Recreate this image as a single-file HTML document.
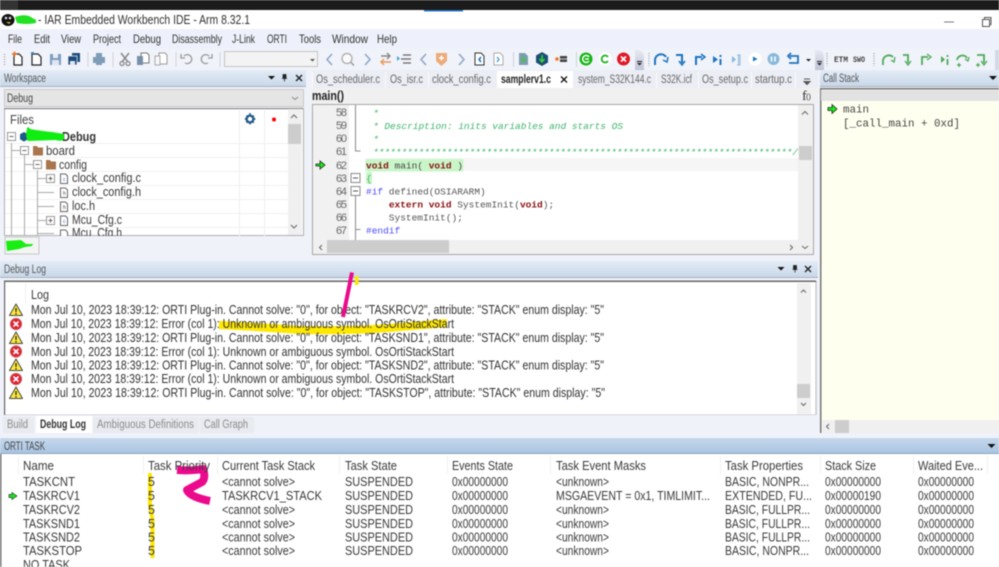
<!DOCTYPE html>
<html><head><meta charset="utf-8"><style>
html,body{margin:0;padding:0;background:#f0f2fa;width:999px;height:567px;overflow:hidden}
svg{display:block;filter:blur(.4px)}
text{font-family:"Liberation Sans",sans-serif;font-size:12.5px;fill:#3a3a3a;white-space:pre}
.m{font-family:"Liberation Mono",monospace;font-size:9.5px}
.c{fill:#3eb56c;font-style:italic}
.k{fill:#8a1010;font-weight:bold}
.p{fill:#4a4aff}
.n{fill:#666;font-size:11px}
.tb{font-size:11.5px;fill:#666}
.g{font-size:11.5px;fill:#8a8a8a}
.h{font-size:12px;fill:#333}
.w{font-size:11.5px;fill:#555}
</style></head><body>
<svg width="999" height="567" viewBox="0 0 999 567" xmlns="http://www.w3.org/2000/svg">
<defs>
<linearGradient id="h1" x1="0" y1="0" x2="0" y2="1"><stop offset="0" stop-color="#e4ecf6"/><stop offset="1" stop-color="#c8d8ea"/></linearGradient>
<linearGradient id="h2" x1="0" y1="0" x2="0" y2="1"><stop offset="0" stop-color="#c6d8ec"/><stop offset="1" stop-color="#a9c5e3"/></linearGradient>
<linearGradient id="gr" x1="0" y1="0" x2="0" y2="1"><stop offset="0" stop-color="#e8e9f2"/><stop offset="1" stop-color="#bfc3d6"/></linearGradient>
</defs>
<rect width="999" height="567" fill="#f0f2fa"/>
<!-- top -->
<rect width="999" height="10" fill="#1b1b1b"/>
<rect x="0" y="0" width="18" height="10" fill="#333"/>
<rect y="10" width="999" height="19" fill="#fff"/>
<rect x="424" y="10" width="39" height="1.5" fill="#2a78d0"/>
<ellipse cx="8" cy="20" rx="6.500" ry="6" fill="#111"/><circle cx="6" cy="18" r="1.300" fill="#ddd"/><circle cx="10" cy="18" r="1.300" fill="#ddd"/><path d="M6 22h5l-2 2z" fill="#c9b040"/>
<path d="M15 17q8-3 14-1l7 4v3q-10 2-19 0z" fill="#22e022"/>
<text x="38" y="24" textLength="212" lengthAdjust="spacingAndGlyphs" style="font-size:13px;fill:#333">- IAR Embedded Workbench IDE - Arm 8.32.1</text>
<rect x="944" y="21.5" width="10" height="1" fill="#777"/>
<path d="M982.5 19.5h7v7h-7zM984.5 19.5v-2h6.500v7h-2" fill="none" stroke="#555" stroke-width="1"/>
<!-- menu -->
<rect y="29" width="999" height="20" fill="#eef1fb"/>
<text x="8" y="43" textLength="14" lengthAdjust="spacingAndGlyphs" class="h">File</text>
<text x="34" y="43" textLength="16" lengthAdjust="spacingAndGlyphs" class="h">Edit</text>
<text x="61" y="43" textLength="20" lengthAdjust="spacingAndGlyphs" class="h">View</text>
<text x="93" y="43" textLength="28" lengthAdjust="spacingAndGlyphs" class="h">Project</text>
<text x="133" y="43" textLength="28" lengthAdjust="spacingAndGlyphs" class="h">Debug</text>
<text x="172" y="43" textLength="50" lengthAdjust="spacingAndGlyphs" class="h">Disassembly</text>
<text x="232" y="43" textLength="23" lengthAdjust="spacingAndGlyphs" class="h">J-Link</text>
<text x="267" y="43" textLength="20" lengthAdjust="spacingAndGlyphs" class="h">ORTI</text>
<text x="299" y="43" textLength="22" lengthAdjust="spacingAndGlyphs" class="h">Tools</text>
<text x="332" y="43" textLength="36" lengthAdjust="spacingAndGlyphs" class="h">Window</text>
<text x="377" y="43" textLength="20" lengthAdjust="spacingAndGlyphs" class="h">Help</text>
<!-- toolbar -->
<rect y="49" width="999" height="21" fill="#f1f3fa"/>
<path d="M4.500 54v12" stroke="#999" stroke-width="1.200" stroke-dasharray="1 1.500"/>
<path d="M14 54h5l3 3v8h-8z" fill="#fff" stroke="#222" stroke-width="1.200"/><path d="M12 54h5M14.500 51.500v5" stroke="#e8702a" stroke-width="1.500"/>
<path d="M32 54h6l3 3v8h-9z" fill="#fff" stroke="#222" stroke-width="1.200"/><path d="M31 53l3 0" stroke="#3a90d0" stroke-width="2"/>
<path d="M50 54h11v11h-11z" fill="#7d9dbf"/><rect x="53" y="54" width="5" height="4" fill="#e8eef6"/><rect x="52" y="60" width="7" height="5" fill="#dfe6ef"/>
<path d="M72 53h8v9h-8z" fill="#1f4f7f"/><path d="M68 56h9v9h-9z" fill="#1d4a78" stroke="#f1f3fa" stroke-width=".7"/><rect x="70" y="61" width="5" height="4" fill="#dfe6ef"/>
<rect x="87.500" y="52" width="1" height="15" fill="#cfd2da"/>
<path d="M96 53h6v4h-6zM93 57h12v6h-12zM96 61h6v4h-6z" fill="#7f9cb6"/>
<rect x="112.500" y="52" width="1" height="15" fill="#cfd2da"/>
<path d="M121 53l7 9M129 53l-7 9" stroke="#888" stroke-width="1.500"/><circle cx="122" cy="63.500" r="2" fill="none" stroke="#888" stroke-width="1.300"/><circle cx="128" cy="63.500" r="2" fill="none" stroke="#888" stroke-width="1.300"/>
<path d="M141 53h6l2 2v8h-8z" fill="#fff" stroke="#777"/><path d="M137 56h6v9h-6z" fill="#778fa8"/>
<path d="M159 53h6l2 2v9h-8z" fill="#fff" stroke="#999"/><path d="M155 56h5v9h-5z" fill="#f8f8f8" stroke="#aaa"/>
<rect x="175.500" y="52" width="1" height="15" fill="#cfd2da"/>
<path d="M184 56a4.500 4.500 0 1 1 1 7M181 54v4h4" fill="none" stroke="#999" stroke-width="1.300"/>
<path d="M209 56a4.500 4.500 0 1 0-1 7M212 54v4h-4" fill="none" stroke="#999" stroke-width="1.300"/>
<rect x="219.500" y="52" width="1" height="15" fill="#cfd2da"/>
<rect x="224.500" y="51.500" width="93" height="15" fill="#f3f3f3" stroke="#c4c4c4"/><path d="M310 59h5l-2.500 2.500z" fill="#555"/>
<path d="M332 54l-5 5.500 5 5.500" fill="none" stroke="#8aa6c6" stroke-width="1.500"/>
<circle cx="347" cy="58.500" r="5" fill="#fafafa" stroke="#aaa" stroke-width="1.300"/><path d="M351 62.500l3 3" stroke="#999" stroke-width="1.500"/>
<path d="M365 54l5 5.500-5 5.500" fill="none" stroke="#8aa6c6" stroke-width="1.500"/>
<path d="M381 56h9M387 53l3 3-3 3" fill="none" stroke="#888" stroke-width="1.400"/><path d="M391 62h-9M384 59l-3 3 3 3" fill="none" stroke="#e89858" stroke-width="1.400"/>
<path d="M397 56l3 2.500-3 2.500z" fill="#4aa0d8"/><path d="M403 55h8M401 59h10M403 63h8" stroke="#666" stroke-width="1.300"/>
<path d="M426 54l-5 5.500 5 5.500" fill="none" stroke="#8aa6c6" stroke-width="1.500"/>
<path d="M436 53h11v8l-5.500 5-5.500-5z" fill="#ecab78"/><path d="M439 58h5M441.500 55.500v5" stroke="#fff" stroke-width="1.500"/>
<path d="M459 54l5 5.500-5 5.500" fill="none" stroke="#8aa6c6" stroke-width="1.500"/>
<path d="M475 53h6l3 3v9h-9z" fill="#fff" stroke="#333"/><path d="M481 57l-2 2.500 2 2.500" fill="none" stroke="#1c70c0" stroke-width="1.500"/>
<path d="M494 53h6l3 3v9h-9z" fill="#fff" stroke="#aaa"/><path d="M497 57l2 2.500-2 2.500" fill="none" stroke="#60a8e0" stroke-width="1.500"/>
<rect x="513" y="52" width="1" height="15" fill="#cfd2da"/>
<path d="M519 53h6l3 3v9h-9z" fill="#7f9cb6"/><path d="M523.500 55v6M521 59l2.500 3 2.500-3" fill="none" stroke="#4cc04c" stroke-width="1.400"/>
<path d="M542 52l6 3.500v7l-6 3.500-6-3.500v-7z" fill="#1c4f74"/><path d="M542 55v6M539.500 59l2.500 3 2.500-3" fill="none" stroke="#3bd03b" stroke-width="1.500"/>
<circle cx="557" cy="59" r="1.800" fill="#f07a20"/><path d="M560 56h7v6h-7z" fill="#444"/><path d="M560 59h7" stroke="#eee" stroke-width=".8"/>
<rect x="576" y="52" width="1" height="15" fill="#cfd2da"/>
<circle cx="586" cy="59" r="6.500" fill="#14b414"/><path d="M589 57a3.500 3.500 0 1 0 0 4M585 59h4" fill="none" stroke="#fff" stroke-width="1.500"/>
<circle cx="605" cy="59" r="6.500" fill="#fff"/><path d="M608 57a3.500 3.500 0 1 0 0 4" fill="none" stroke="#1cb41c" stroke-width="1.800"/>
<circle cx="623.500" cy="59" r="6.500" fill="#de1a26"/><path d="M621 56.500l5 5M626 56.500l-5 5" stroke="#fff" stroke-width="1.700"/>
<path d="M635 50h4q5 1 5 8v12h-9z" fill="url(#gr)"/><path d="M637 63h5l-2.500 2.500z" fill="#222"/><path d="M637 61.500h5" stroke="#222"/>
<path d="M649 53v13" stroke="#999" stroke-width="1.200" stroke-dasharray="1 1.500"/>
<g fill="none" stroke="#1c74c0" stroke-width="2">
<path d="M655 65v-5a6 6 0 0 1 11 -3"/><path d="M663 60l4 2 1-5" stroke-width="1.500"/>
<path d="M676 55h6v8"/><path d="M679 61l3 4 3-4" stroke-width="1.500"/>
<path d="M696 65v-8h6"/><path d="M701 54l4 3-4 3" stroke-width="1.500"/>
<path d="M720.500 55v2M720.500 59v6"/>
</g>
<path d="M713 56l5 3.500-5 3.500z" fill="#1c74c0"/>
<path d="M732 56l4 3.500-4 3.500zM737 59.500h-5" fill="#8ab8dc"/><path d="M737 55h3v10h-3M738.500 55v10" fill="none" stroke="#8ab8dc" stroke-width="1"/>
<circle cx="755" cy="59" r="6.500" fill="#fff"/><path d="M753 56.500l4.500 2.500-4.500 2.500z" fill="#1c74c0"/>
<circle cx="773.500" cy="59" r="6" fill="#8ab8dc"/><path d="M771.500 56.500v5M775 56.500v5" stroke="#fff" stroke-width="1.500"/>
<path d="M790 56h8v7h-9M791 53l-3 3 3 3" fill="none" stroke="#1c74c0" stroke-width="1.800"/>
<path d="M806 59h5l-2.500 2.500z" fill="#222"/>
<path d="M815 50h4q5 1 5 8v12h-9z" fill="url(#gr)"/><path d="M817 63h5l-2.500 2.500z" fill="#222"/><path d="M817 61.500h5" stroke="#222"/>
<path d="M827 53v13" stroke="#999" stroke-width="1.200" stroke-dasharray="1 1.500"/>
<text x="834" y="62" textLength="14" lengthAdjust="spacingAndGlyphs" style="font-size:8.500px;fill:#444;font-family:'Liberation Mono',monospace;font-weight:bold">ETM</text>
<text x="853" y="62" textLength="12" lengthAdjust="spacingAndGlyphs" style="font-size:8.500px;fill:#444;font-family:'Liberation Mono',monospace;font-weight:bold">SWO</text>
<path d="M874 53v13" stroke="#999" stroke-width="1.200" stroke-dasharray="1 1.500"/>
<g fill="none" stroke="#4caa5a" stroke-width="1.800">
<path d="M883 65v-5a6 6 0 0 1 10-3"/><path d="M891 60l3 2 1-5" stroke-width="1.300"/>
<path d="M903 55h5v8"/><path d="M905 61l3 4 3-4" stroke-width="1.300"/>
<path d="M922 65v-8h6"/><path d="M927 54l4 3-4 3" stroke-width="1.300"/>
<path d="M947.500 55v2M947.500 59v6"/>
<path d="M957 60a5.500 5.500 0 0 1 10-2"/><path d="M965 59l3 2 1-4" stroke-width="1.300"/><path d="M959 63v4M957 65h4" stroke-width="1.300"/>
<path d="M977 55h7v8"/><path d="M981 61l3 4 3-4" stroke-width="1.300"/><path d="M978 63v4M976 65h4" stroke-width="1.300"/>
</g>
<path d="M941 56l4 3.500-4 3.500z" fill="#4caa5a"/>
<path d="M995 50h4v20h-4z" fill="#d5d8e6"/>
<!-- workspace panel -->
<rect x="0" y="70" width="306" height="190" fill="#f0f2fa"/>
<rect x="0" y="70" width="306" height="16" fill="url(#h1)"/>
<rect x="0" y="86" width="306" height="1" fill="#a8b0bc"/>
<text x="4" y="82" textLength="42" lengthAdjust="spacingAndGlyphs" class="w">Workspace</text>
<path d="M268 76h7l-3.500 3.500z" fill="#111"/><path d="M283 74.500h3v4h-3zM282 78.500h5M284.500 78.500v3" fill="#222" stroke="#222" stroke-width=".8"/><path d="M296 75l6 6M302 75l-6 6" stroke="#222" stroke-width="1.400"/>
<rect x="4.500" y="89.500" width="299" height="17" fill="#e5e5e5" stroke="#c8c8c8"/>
<text x="7" y="102" textLength="26" lengthAdjust="spacingAndGlyphs" class="w" style="fill:#444">Debug</text>
<path d="M292 97l3 2.500 3-2.500" fill="none" stroke="#888"/>
<!-- tree -->
<rect x="4.500" y="108.500" width="299" height="127" fill="#fff" stroke="#b0b0b0"/>
<rect x="4" y="108" width="299" height="1.200" fill="#888"/>
<text x="10" y="124" textLength="24" lengthAdjust="spacingAndGlyphs" style="fill:#444">Files</text>
<path d="M250 114.500a4.500 4.500 0 1 0 .01 0zM250 116.800a2.200 2.200 0 1 1-.01 0z" fill="#235a88" fill-rule="evenodd"/><path d="M250 113v2M250 122.500v2M244.800 119h2M253.500 119h2M246.500 115.500l1.200 1.200M252.600 121.500l1.200 1.200M253.800 115.500l-1.200 1.200M247.500 121.500l-1.200 1.200" stroke="#235a88" stroke-width="1.500"/>
<circle cx="274" cy="119.500" r="2" fill="#f00"/>
<path d="M239.500 109v127M264.500 109v127" stroke="#eeeeee"/>
<path d="M5 143.500h283M5 157.500h283M5 171.500h283M5 185.500h283M5 199.500h283M5 213.500h283M5 227.500h283" stroke="#f0f0f0"/>
<rect x="288" y="109" width="14" height="126" fill="#f0f0f0"/><rect x="288" y="124" width="13" height="20" fill="#cdcdcd"/>
<path d="M291 118l3-3 3 3" fill="none" stroke="#666"/><path d="M291 225l3 3 3-3" fill="none" stroke="#666"/>
<g stroke="#a8a8a8" fill="none">
<path d="M11.500 143v92M24.500 155v80M37.500 170v65M24.500 150.500h-13M37.500 164.500h-13M47 178.500h-10M54 192.500h-17M54 206.500h-17M47 220.500h-10M54 233.500h-17"/>
</g>
<g fill="#fff" stroke="#999">
<rect x="7.500" y="132.500" width="8" height="8"/><rect x="20.500" y="146.500" width="8" height="8"/><rect x="33.500" y="160.500" width="8" height="8"/><rect x="46.500" y="174.500" width="8" height="8"/><rect x="46.500" y="216.500" width="8" height="8"/>
</g>
<path d="M9.500 136.500h4M22.500 150.500h4M35.500 164.500h4M48.500 178.500h4M50.500 176.500v4M48.500 220.500h4M50.500 218.500v4" stroke="#666"/>
<path d="M24 132l4 2.300v5l-4 2.300-4-2.300v-5z" fill="#1f5a86"/>
<text x="62" y="141" textLength="34" lengthAdjust="spacingAndGlyphs" style="font-weight:bold;fill:#333">Debug</text>
<path d="M27 128q2-2 3 1q12 2 22 3l12 2v5q-3 3-8 1l-28 1q-3-4-1-13z" fill="#0fee10"/>
<path d="M33 146h4l1 1.500h5v8h-10z" fill="#a8754c"/><path d="M46 160h4l1 1.500h5v8h-10z" fill="#a8754c"/>
<text x="46" y="155" textLength="29" lengthAdjust="spacingAndGlyphs">board</text>
<text x="59" y="169" textLength="28" lengthAdjust="spacingAndGlyphs">config</text>
<g fill="#fff" stroke="#666"><path d="M60.500 174h5l2 2v7.500h-7z"/><path d="M60.500 188h5l2 2v7.500h-7z"/><path d="M60.500 202h5l2 2v7.500h-7z"/><path d="M60.500 216h5l2 2v7.500h-7z"/><path d="M60.500 230h5l2 2v7.500h-7z"/></g>
<text x="63" y="181" style="font-size:5px;fill:#2a6ab0">c</text><text x="63" y="195" style="font-size:5px">h</text><text x="63" y="209" style="font-size:5px">h</text><text x="63" y="223" style="font-size:5px;fill:#2a6ab0">c</text>
<text x="72" y="182" textLength="69" lengthAdjust="spacingAndGlyphs">clock_config.c</text>
<text x="72" y="196" textLength="69" lengthAdjust="spacingAndGlyphs">clock_config.h</text>
<text x="72" y="210" textLength="23" lengthAdjust="spacingAndGlyphs">loc.h</text>
<text x="72" y="224" textLength="50" lengthAdjust="spacingAndGlyphs">Mcu_Cfg.c</text>
<text x="72" y="237" textLength="50" lengthAdjust="spacingAndGlyphs">Mcu_Cfg.h</text>
<rect x="0" y="236" width="306" height="24" fill="#f0f2fa"/>
<rect x="5" y="237" width="34" height="17" fill="#f4f4f4" stroke="#bbb" stroke-width=".8"/>
<path d="M6 241l15 -1 5 4 7 0 -1 2-7 1-6 2-12 2z" fill="#18ee12"/>
<!-- editor -->
<rect x="306" y="70" width="5" height="190" fill="#f0f2fa"/>
<rect x="312" y="70" width="506" height="18" fill="#eceef5"/>
<rect x="497" y="71" width="76" height="17" fill="#fff"/>
<path d="M312.500 72v16M385.500 72v16M428.500 72v16M656.500 72v16M698.500 72v16M751.500 72v16M795.500 72v16" stroke="#fafafa"/>
<text x="316" y="83" textLength="64" lengthAdjust="spacingAndGlyphs" class="tb">Os_scheduler.c</text>
<text x="390" y="83" textLength="33" lengthAdjust="spacingAndGlyphs" class="tb">Os_isr.c</text>
<text x="432" y="83" textLength="59" lengthAdjust="spacingAndGlyphs" class="tb">clock_config.c</text>
<text x="501" y="83" textLength="50" lengthAdjust="spacingAndGlyphs" class="tb" style="font-weight:bold;fill:#222">samplerv1.c</text>
<text x="578" y="83" textLength="73" lengthAdjust="spacingAndGlyphs" class="tb">system_S32K144.c</text>
<text x="661" y="83" textLength="31" lengthAdjust="spacingAndGlyphs" class="tb">S32K.icf</text>
<text x="702" y="83" textLength="46" lengthAdjust="spacingAndGlyphs" class="tb">Os_setup.c</text>
<text x="755" y="83" textLength="37" lengthAdjust="spacingAndGlyphs" class="tb">startup.c</text>
<path d="M561 76.500l6 6M567 76.500l-6 6" stroke="#111" stroke-width="1.300"/>
<path d="M804 79h6M804 81.500h6l-3 3z" stroke="#555" fill="#555"/>
<rect x="311" y="88" width="507" height="16" fill="#f0f0f0"/>
<text x="312" y="100" textLength="32" lengthAdjust="spacingAndGlyphs" style="font-size:13px;font-weight:bold;fill:#222">main()</text>
<text x="802" y="100" style="font-size:14px;fill:#333;font-family:'Liberation Serif',serif">f</text><text x="806" y="99" style="font-size:7.500px;fill:#333">()</text>
<rect x="312.500" y="104.500" width="501" height="150" fill="#fff" stroke="#a8a8a8"/>
<rect x="313" y="105" width="36" height="135" fill="#f1f1f1"/>
<rect x="349" y="105" width="12" height="135" fill="#fff"/>
<rect x="365" y="158" width="433" height="13" fill="#f6f6f6"/>
<rect x="365.500" y="159" width="98" height="12.500" rx="2" fill="#c9f5c9"/>
<rect x="366" y="172" width="6" height="12" rx="1.500" fill="#c9f5c9"/>
<text x="336" y="116" class="n" textLength="11">58</text><text x="336" y="129" class="n" textLength="11">59</text><text x="336" y="142" class="n" textLength="11">60</text><text x="336" y="155" class="n" textLength="11">61</text><text x="336" y="169" class="n" textLength="11">62</text><text x="336" y="182" class="n" textLength="11">63</text><text x="336" y="195" class="n" textLength="11">64</text><text x="336" y="208" class="n" textLength="11">65</text><text x="336" y="221" class="n" textLength="11">66</text><text x="336" y="234" class="n" textLength="11">67</text>
<path d="M316 165h4v-3l5 4-5 4v-3h-4z" fill="#14ee14" stroke="#222" stroke-width=".8" transform="translate(0,-1)"/>
<path d="M355.500 105v46h5" fill="none" stroke="#8a8a8a"/>
<path d="M355.500 196v44M355.500 229.500h5" fill="none" stroke="#8a8a8a"/>
<g fill="#fff" stroke="#888"><rect x="351" y="173.500" width="9" height="9"/><rect x="351" y="186.500" width="9" height="9"/></g>
<path d="M353 178h5M353 191h5" stroke="#555"/>
<text x="373" y="116" class="m c">*</text>
<text x="373" y="129" class="m c" textLength="250">* Description: inits variables and starts OS</text>
<text x="373" y="142" class="m c">*</text>
<text x="373" y="155" class="m c" textLength="425" lengthAdjust="spacingAndGlyphs">**************************************************************************/</text>
<text x="366" y="168.500" class="m" style="fill:#444"><tspan class="k">void</tspan> main( <tspan class="k">void</tspan> )</text>
<text x="366" y="181.500" class="m" style="fill:#3eb56c">{</text>
<text x="366" y="194.500" class="m" style="fill:#555"><tspan class="p">#if</tspan> defined(OSIARARM)</text>
<text x="366" y="207.500" class="m" style="fill:#555">    <tspan class="k">extern void</tspan> SystemInit(<tspan class="k">void</tspan>);</text>
<text x="366" y="220.500" class="m" style="fill:#555">    SystemInit();</text>
<text x="366" y="233.500" class="m p">#endif</text>
<rect x="798" y="105" width="15" height="135" fill="#f0f0f0"/><rect x="799" y="146" width="13" height="14" fill="#cdcdcd"/>
<path d="M802 114.500l3-3 3 3" fill="none" stroke="#666"/>
<rect x="313" y="240" width="500" height="14" fill="#f0f0f0"/><rect x="327" y="240" width="122" height="13" fill="#cdcdcd"/>
<path d="M322 245l-2.500 2.500 2.500 2.500M790 245l2.500 2.500-2.500 2.500M802 246l3 2.500 3-2.500" fill="none" stroke="#666"/>
<!-- debug log -->
<rect x="0" y="257" width="818" height="4" fill="#f0f2fa"/>
<rect x="0" y="261" width="818" height="16" fill="url(#h1)"/><rect x="0" y="277" width="818" height="1" fill="#a8b0bc"/>
<text x="4" y="273" textLength="42" lengthAdjust="spacingAndGlyphs" class="w">Debug Log</text>
<path d="M777.500 267h7l-3.500 3.500z" fill="#111"/><path d="M793.500 265.500h3v4h-3zM792.500 269.500h5M795 269.500v3" fill="#222" stroke="#222" stroke-width=".8"/><path d="M805 266l6 6M811 266l-6 6" stroke="#222" stroke-width="1.400"/>
<rect x="4.500" y="281" width="811.500" height="134" fill="#fff" stroke="#b8b8b8"/>
<rect x="4" y="280.500" width="812" height="1.500" fill="#666"/><rect x="4" y="281" width="1.200" height="134" fill="#666"/>
<rect x="25" y="283" width="1" height="20" fill="#f0f0f0"/>
<rect x="797" y="283" width="14" height="131" fill="#f0f0f0"/><rect x="797" y="384" width="13" height="14" fill="#cdcdcd"/>
<path d="M801 292.500l2.500-2.500 2.500 2.500M801 403l2.500 2.500 2.500-2.500" fill="none" stroke="#666"/>
<!-- annotations under text -->
<path d="M219 325 Q260 327 300 330 Q360 331 400 327 L447 323" fill="none" stroke="#ffe800" stroke-width="8"/>
<text x="31" y="299" textLength="18" lengthAdjust="spacingAndGlyphs">Log</text>
<text x="31" y="314" textLength="573" lengthAdjust="spacingAndGlyphs" style="fill:#333">Mon Jul 10, 2023 18:39:12: ORTI Plug-in. Cannot solve: "0", for object: "TASKRCV2", attribute: "STACK" enum display: "5"</text>
<text x="31" y="328" textLength="423" lengthAdjust="spacingAndGlyphs" style="fill:#333">Mon Jul 10, 2023 18:39:12: Error (col 1): Unknown or ambiguous symbol. OsOrtiStackStart</text>
<text x="31" y="342" textLength="573" lengthAdjust="spacingAndGlyphs" style="fill:#333">Mon Jul 10, 2023 18:39:12: ORTI Plug-in. Cannot solve: "0", for object: "TASKSND1", attribute: "STACK" enum display: "5"</text>
<text x="31" y="356" textLength="423" lengthAdjust="spacingAndGlyphs" style="fill:#333">Mon Jul 10, 2023 18:39:12: Error (col 1): Unknown or ambiguous symbol. OsOrtiStackStart</text>
<text x="31" y="369.500" textLength="573" lengthAdjust="spacingAndGlyphs" style="fill:#333">Mon Jul 10, 2023 18:39:12: ORTI Plug-in. Cannot solve: "0", for object: "TASKSND2", attribute: "STACK" enum display: "5"</text>
<text x="31" y="383" textLength="423" lengthAdjust="spacingAndGlyphs" style="fill:#333">Mon Jul 10, 2023 18:39:12: Error (col 1): Unknown or ambiguous symbol. OsOrtiStackStart</text>
<text x="31" y="397" textLength="574" lengthAdjust="spacingAndGlyphs" style="fill:#333">Mon Jul 10, 2023 18:39:12: ORTI Plug-in. Cannot solve: "0", for object: "TASKSTOP", attribute: "STACK" enum display: "5"</text>
<!-- log icons -->
<g fill="#ffec3a" stroke="#444" stroke-linejoin="round"><path d="M16 304l6.500 11.500h-13z"/><path d="M16 332l6.500 11.500h-13z"/><path d="M16 359l6.500 11.500h-13z"/><path d="M16 387l6.500 11.500h-13z"/></g>
<path d="M16 308v4M16 313v1.500M16 336v4M16 341v1.500M16 363v4M16 368v1.500M16 391v4M16 396v1.500" stroke="#222" stroke-width="1.300"/>
<g fill="#e02030" stroke="#b88" stroke-width=".8"><circle cx="16" cy="324" r="5.800"/><circle cx="16" cy="351.500" r="5.800"/><circle cx="16" cy="379" r="5.800"/></g>
<path d="M13.500 321.500l5 5M18.500 321.500l-5 5M13.500 349l5 5M18.500 349l-5 5M13.500 376.500l5 5M18.500 376.500l-5 5" stroke="#fff" stroke-width="1.600"/>
<path d="M352 272.500 L343 317" fill="none" stroke="#ec0a8c" stroke-width="4"/>
<rect x="355" y="276" width="3.500" height="9" fill="#ffe800"/>
<!-- bottom tabs -->
<rect x="0" y="415" width="818" height="23" fill="#f0f2fa"/>
<rect x="3" y="417" width="31" height="16" fill="#e9ebf1"/><rect x="36" y="416" width="56" height="17" fill="#fff"/><rect x="93" y="417" width="106" height="16" fill="#e9ebf1"/><rect x="200" y="417" width="54" height="16" fill="#e9ebf1"/>
<text x="7" y="428" textLength="21" lengthAdjust="spacingAndGlyphs" class="g">Build</text>
<text x="40" y="428" textLength="46" lengthAdjust="spacingAndGlyphs" class="g" style="fill:#333;font-weight:bold">Debug Log</text>
<text x="97" y="428" textLength="97" lengthAdjust="spacingAndGlyphs" class="g">Ambiguous Definitions</text>
<text x="204" y="428" textLength="44" lengthAdjust="spacingAndGlyphs" class="g">Call Graph</text>
<!-- call stack -->
<rect x="818" y="70" width="181" height="368" fill="#f0f2fa"/>
<rect x="820" y="70" width="179" height="16" fill="url(#h1)"/><rect x="820" y="86" width="179" height="1" fill="#a8b0bc"/>
<text x="823" y="82" textLength="36" lengthAdjust="spacingAndGlyphs" class="w">Call Stack</text>
<path d="M989 76h8l-4 4z" fill="#111"/>
<rect x="820" y="88" width="179" height="345" fill="#fffff0"/>
<rect x="820" y="88" width="179" height="1.500" fill="#777"/><rect x="820" y="88" width="1.500" height="345" fill="#777"/>
<rect x="821" y="90" width="178" height="11" fill="#e2e2e2"/>
<path d="M828 107.500h4v-3l5 4.500-5 4.500v-3h-4z" fill="#14ee14" stroke="#222" stroke-width=".8"/>
<text x="843" y="112.500" style="font-family:'Liberation Mono',monospace;font-size:10.800px;fill:#444" textLength="26">main</text>
<text x="843" y="126.500" style="font-family:'Liberation Mono',monospace;font-size:10.800px;fill:#444" textLength="117">[_call_main + 0xd]</text>
<rect x="822" y="420" width="177" height="13" fill="#f0f0f0"/><rect x="835" y="420" width="14" height="13" fill="#cdcdcd"/>
<path d="M829 424l-2.500 2.500 2.500 2.500" fill="none" stroke="#666"/>
<!-- ORTI -->
<rect x="0" y="433" width="999" height="5" fill="#f0f2fa"/>
<rect x="0" y="438" width="999" height="15" fill="url(#h2)"/><rect x="0" y="453" width="999" height="1" fill="#8ea4bc"/>
<text x="4" y="450" textLength="41" lengthAdjust="spacingAndGlyphs" class="w" style="fill:#444">ORTI TASK</text>
<path d="M987.500 444h8l-4 4z" fill="#111"/>
<rect x="0" y="454" width="999" height="113" fill="#fff"/><rect x="0" y="454" width="1.500" height="113" fill="#777"/>
<path d="M18.500 456v18M143.500 456v18M217.500 456v18M339.500 456v18M447.500 456v18M550.500 456v18M720.500 456v18M820.500 456v18M913.500 456v18M987.500 456v18" stroke="#efefef"/>
<path d="M150 473 L150 505 L152.500 520 L152.500 558" fill="none" stroke="#ffe600" stroke-width="4"/>
<path d="M177 470 Q192 471 203 469 Q206 478 202 482 L187 490 Q190 497 210 501" fill="none" stroke="#ec0a8c" stroke-width="8" stroke-linejoin="round"/>
<g style="fill:#444">
<text x="23" y="470" textLength="31" lengthAdjust="spacingAndGlyphs">Name</text>
<text x="148" y="470" textLength="62" lengthAdjust="spacingAndGlyphs">Task Priority</text>
<text x="222" y="470" textLength="93" lengthAdjust="spacingAndGlyphs">Current Task Stack</text>
<text x="345" y="470" textLength="52" lengthAdjust="spacingAndGlyphs">Task State</text>
<text x="452" y="470" textLength="61" lengthAdjust="spacingAndGlyphs">Events State</text>
<text x="556" y="470" textLength="90" lengthAdjust="spacingAndGlyphs">Task Event Masks</text>
<text x="725" y="470" textLength="78" lengthAdjust="spacingAndGlyphs">Task Properties</text>
<text x="825" y="470" textLength="51" lengthAdjust="spacingAndGlyphs">Stack Size</text>
<text x="918" y="470" textLength="65" lengthAdjust="spacingAndGlyphs">Waited Eve...</text>
</g>
<path d="M9 494.500h3v-2l5 3.500-5 3.500v-2h-3z" fill="#14ee14" stroke="#333" stroke-width=".7"/>
<text x="23" y="486" textLength="52" lengthAdjust="spacingAndGlyphs">TASKCNT</text><text x="23" y="500" textLength="57" lengthAdjust="spacingAndGlyphs">TASKRCV1</text><text x="23" y="514" textLength="57" lengthAdjust="spacingAndGlyphs">TASKRCV2</text><text x="23" y="528" textLength="57" lengthAdjust="spacingAndGlyphs">TASKSND1</text><text x="23" y="541.500" textLength="57" lengthAdjust="spacingAndGlyphs">TASKSND2</text><text x="23" y="555" textLength="59" lengthAdjust="spacingAndGlyphs">TASKSTOP</text><text x="23" y="569" textLength="47" lengthAdjust="spacingAndGlyphs">NO TASK</text>
<text x="148" y="486">5</text><text x="148" y="500">5</text><text x="148" y="514">5</text><text x="148" y="528">5</text><text x="148" y="541.500">5</text><text x="148" y="555">5</text>
<text x="222" y="486" textLength="73" lengthAdjust="spacingAndGlyphs">&lt;cannot solve&gt;</text><text x="222" y="500" textLength="100" lengthAdjust="spacingAndGlyphs">TASKRCV1_STACK</text><text x="222" y="514" textLength="73" lengthAdjust="spacingAndGlyphs">&lt;cannot solve&gt;</text><text x="222" y="528" textLength="73" lengthAdjust="spacingAndGlyphs">&lt;cannot solve&gt;</text><text x="222" y="541.500" textLength="73" lengthAdjust="spacingAndGlyphs">&lt;cannot solve&gt;</text><text x="222" y="555" textLength="73" lengthAdjust="spacingAndGlyphs">&lt;cannot solve&gt;</text>
<text x="345" y="486" textLength="68" lengthAdjust="spacingAndGlyphs">SUSPENDED</text><text x="345" y="500" textLength="68" lengthAdjust="spacingAndGlyphs">SUSPENDED</text><text x="345" y="514" textLength="68" lengthAdjust="spacingAndGlyphs">SUSPENDED</text><text x="345" y="528" textLength="68" lengthAdjust="spacingAndGlyphs">SUSPENDED</text><text x="345" y="541.500" textLength="68" lengthAdjust="spacingAndGlyphs">SUSPENDED</text><text x="345" y="555" textLength="68" lengthAdjust="spacingAndGlyphs">SUSPENDED</text>
<text x="452" y="486" textLength="56" lengthAdjust="spacingAndGlyphs">0x00000000</text><text x="452" y="500" textLength="56" lengthAdjust="spacingAndGlyphs">0x00000000</text><text x="452" y="514" textLength="56" lengthAdjust="spacingAndGlyphs">0x00000000</text><text x="452" y="528" textLength="56" lengthAdjust="spacingAndGlyphs">0x00000000</text><text x="452" y="541.500" textLength="56" lengthAdjust="spacingAndGlyphs">0x00000000</text><text x="452" y="555" textLength="56" lengthAdjust="spacingAndGlyphs">0x00000000</text>
<text x="556" y="486" textLength="53" lengthAdjust="spacingAndGlyphs">&lt;unknown&gt;</text><text x="556" y="500" textLength="154" lengthAdjust="spacingAndGlyphs">MSGAEVENT = 0x1, TIMLIMIT...</text><text x="556" y="514" textLength="53" lengthAdjust="spacingAndGlyphs">&lt;unknown&gt;</text><text x="556" y="528" textLength="53" lengthAdjust="spacingAndGlyphs">&lt;unknown&gt;</text><text x="556" y="541.500" textLength="53" lengthAdjust="spacingAndGlyphs">&lt;unknown&gt;</text><text x="556" y="555" textLength="53" lengthAdjust="spacingAndGlyphs">&lt;unknown&gt;</text>
<text x="725" y="486" textLength="84" lengthAdjust="spacingAndGlyphs">BASIC, NONPR...</text><text x="725" y="500" textLength="87" lengthAdjust="spacingAndGlyphs">EXTENDED, FU...</text><text x="725" y="514" textLength="85" lengthAdjust="spacingAndGlyphs">BASIC, FULLPR...</text><text x="725" y="528" textLength="85" lengthAdjust="spacingAndGlyphs">BASIC, FULLPR...</text><text x="725" y="541.500" textLength="85" lengthAdjust="spacingAndGlyphs">BASIC, FULLPR...</text><text x="725" y="555" textLength="84" lengthAdjust="spacingAndGlyphs">BASIC, NONPR...</text>
<text x="825" y="486" textLength="56" lengthAdjust="spacingAndGlyphs">0x00000000</text><text x="825" y="500" textLength="56" lengthAdjust="spacingAndGlyphs">0x00000190</text><text x="825" y="514" textLength="56" lengthAdjust="spacingAndGlyphs">0x00000000</text><text x="825" y="528" textLength="56" lengthAdjust="spacingAndGlyphs">0x00000000</text><text x="825" y="541.500" textLength="56" lengthAdjust="spacingAndGlyphs">0x00000000</text><text x="825" y="555" textLength="56" lengthAdjust="spacingAndGlyphs">0x00000000</text>
<text x="918" y="486" textLength="56" lengthAdjust="spacingAndGlyphs">0x00000000</text><text x="918" y="500" textLength="56" lengthAdjust="spacingAndGlyphs">0x00000000</text><text x="918" y="514" textLength="56" lengthAdjust="spacingAndGlyphs">0x00000000</text><text x="918" y="528" textLength="56" lengthAdjust="spacingAndGlyphs">0x00000000</text><text x="918" y="541.500" textLength="56" lengthAdjust="spacingAndGlyphs">0x00000000</text><text x="918" y="555" textLength="56" lengthAdjust="spacingAndGlyphs">0x00000000</text>
</svg>
</body></html>
